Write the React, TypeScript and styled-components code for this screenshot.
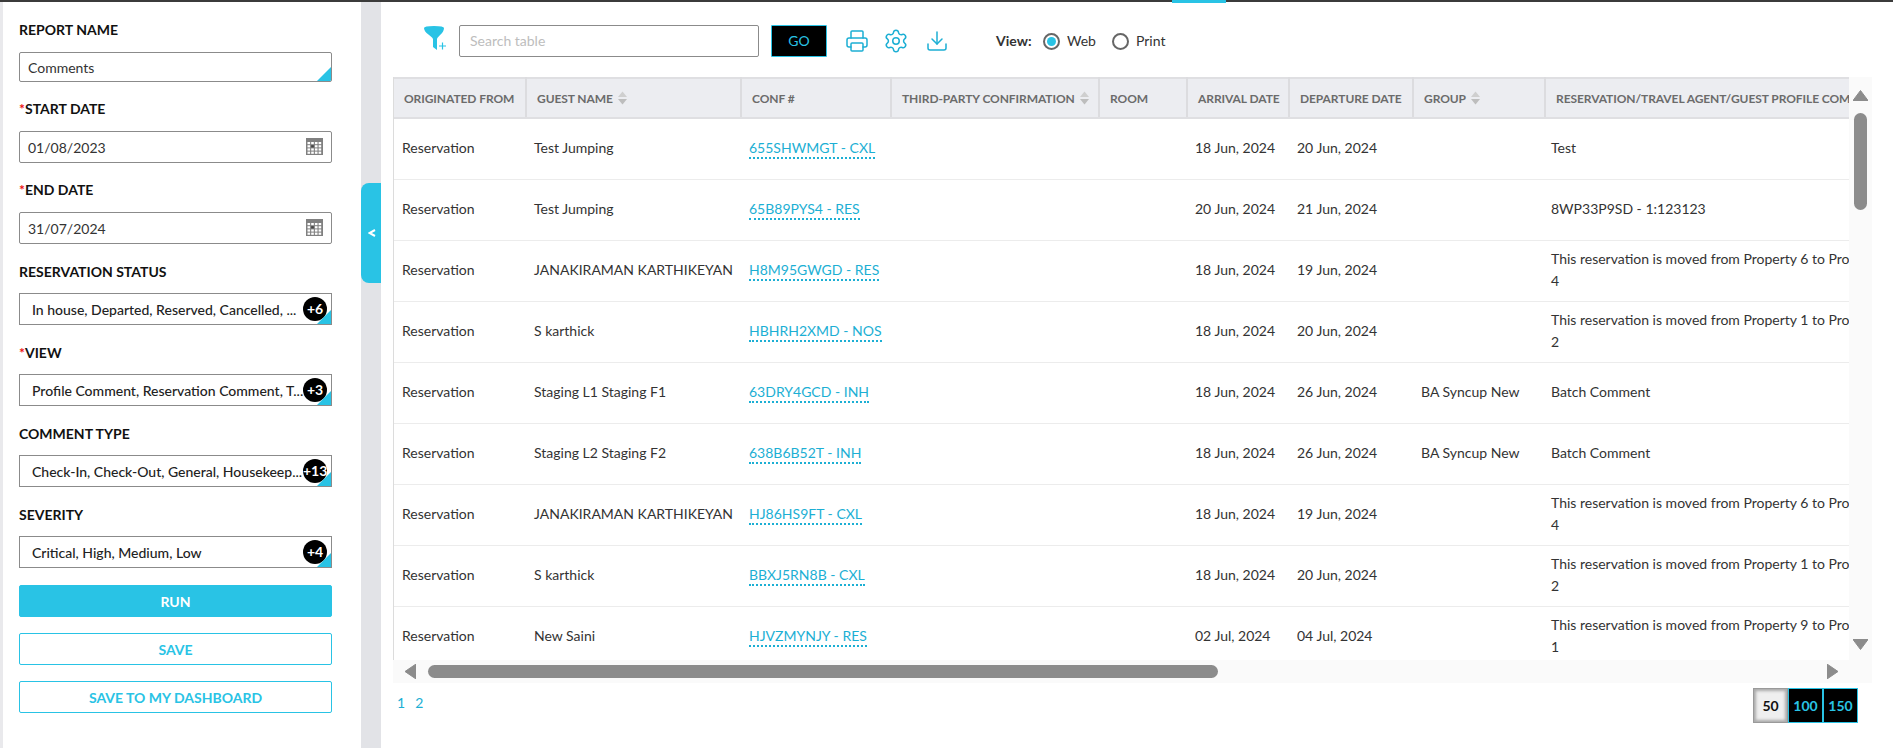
import React from "react";
import styled, { createGlobalStyle } from "styled-components";
import { Printer, Settings, Download } from "lucide-react";

const CYAN = "#29c3e5";
const LINK = "#1cafd4";

const Global = createGlobalStyle`
  html, body { margin: 0; padding: 0; background: #fff; }
  * { box-sizing: border-box; }
  body { font-family: Lato, "Liberation Sans", sans-serif; color: #222; overflow: hidden; }
`;

const Page = styled.div`
  width: 1893px;
  height: 748px;
  display: flex;
  flex-direction: column;
  overflow: hidden;
  background: #fff;
`;
const TopBar = styled.div`
  height: 2px;
  flex: none;
  background: #3b3b3b;
  position: relative;
`;
const TopAccent = styled.span`
  position: absolute;
  left: 1172px;
  top: 0;
  width: 54px;
  height: 3px;
  background: ${CYAN};
`;
const Body = styled.div`
  flex: 1;
  display: flex;
  min-height: 0;
`;
const Side = styled.aside`
  width: 361px;
  flex: none;
  border-left: 3px solid #e9e9ec;
  padding: 18px 29px 0 16px;
  display: flex;
  flex-direction: column;
`;
const Label = styled.label<{ $low?: boolean }>`
  font-size: 14px;
  font-weight: 700;
  line-height: 20px;
  height: 20px;
  padding-top: ${(p) => (p.$low ? 1 : 0)}px;
  color: #111;
  margin-bottom: 12px;
  display: block;
  white-space: nowrap;
`;
const Star = styled.span`
  color: #e11;
`;
const Field = styled.div<{ $h?: number }>`
  position: relative;
  height: ${(p) => p.$h ?? 32}px;
  border: 1px solid #8b8b8b;
  border-radius: 2px;
  margin-bottom: 17px;
  font-size: 14px;
  display: flex;
  align-items: center;
  padding-left: 8px;
  color: #333;
  background: #fff;
  overflow: hidden;
`;
const MultiField = styled(Field)`
  padding-left: 12px;
  font-weight: 500;
  color: #222;
  border-radius: 0;
`;
const Corner = styled.span`
  position: absolute;
  right: 0;
  bottom: 0;
  width: 0;
  height: 0;
  border-style: solid;
  border-width: 0 0 14px 14px;
  border-color: transparent transparent ${CYAN} transparent;
`;
const Count = styled.span`
  position: absolute;
  right: 4px;
  top: 3px;
  width: 24px;
  height: 24px;
  border-radius: 50%;
  background: #000;
  color: #fff;
  font-size: 14px;
  font-weight: 700;
  text-align: center;
  line-height: 24px;
  white-space: nowrap;
`;
const CalWrap = styled.span`
  position: absolute;
  right: 8px;
  top: 6px;
  display: flex;
`;
const RunBtn = styled.button`
  height: 32px;
  width: 100%;
  border: 1px solid ${CYAN};
  background: ${CYAN};
  color: #fff;
  font: 700 14px Lato, sans-serif;
  border-radius: 2px;
  margin-bottom: 16px;
  padding: 0;
`;
const OutlineBtn = styled(RunBtn)`
  background: #fff;
  color: ${CYAN};
`;
const Gutter = styled.div`
  width: 20px;
  flex: none;
  background: #e2e3e7;
  padding-top: 181px;
`;
const Toggle = styled.div`
  width: 20px;
  height: 100px;
  background: ${CYAN};
  border-radius: 8px 0 0 8px;
  color: #fff;
  display: flex;
  align-items: center;
  justify-content: center;
  padding-left: 2px;
`;
const Main = styled.main`
  flex: 1;
  min-width: 0;
  padding: 23px 0 0 12px;
  display: flex;
  flex-direction: column;
`;
const Toolbar = styled.div`
  display: flex;
  align-items: center;
  height: 32px;
  margin-bottom: 20px;
  padding-left: 30px;
`;
const FilterBtn = styled.span`
  display: flex;
  width: 24px;
  margin-right: 12px;
  padding-bottom: 4px;
`;
const Search = styled.div`
  width: 300px;
  height: 32px;
  border: 1px solid #8b8b8b;
  border-radius: 2px;
  font-size: 14px;
  color: #bdbdbd;
  display: flex;
  align-items: center;
  padding: 0 0 2px 10px;
`;
const GoBtn = styled.button`
  margin-left: 12px;
  width: 56px;
  height: 32px;
  background: #000;
  border: 1px solid ${CYAN};
  color: ${CYAN};
  font: 400 14px Lato, sans-serif;
  border-radius: 1px;
  padding: 0 0 2px;
`;
const Tool = styled.span<{ $ml: number }>`
  display: flex;
  margin-left: ${(p) => p.$ml}px;
  color: ${LINK};
`;
const ViewLabel = styled.span`
  margin-left: 47px;
  font-size: 14px;
  font-weight: 700;
  color: #333;
  width: 47px;
  padding-bottom: 2px;
`;
const Radio = styled.span<{ $on?: boolean }>`
  width: 17px;
  height: 17px;
  border-radius: 50%;
  border: 2px solid #666;
  background: #fff;
  display: flex;
  align-items: center;
  justify-content: center;
  &::after {
    content: "";
    width: 9px;
    height: 9px;
    border-radius: 50%;
    background: ${(p) => (p.$on ? CYAN : "transparent")};
  }
`;
const RadioText = styled.span<{ $w: number }>`
  margin-left: 7px;
  font-size: 14px;
  color: #333;
  width: ${(p) => p.$w}px;
  padding-bottom: 2px;
`;
const TableArea = styled.div`
  width: 1479px;
  display: grid;
  grid-template-columns: 1456px 23px;
  grid-template-rows: 583px 23px;
`;
const TableClip = styled.div`
  overflow: hidden;
  border-left: 1px solid #dcdcdc;
`;
const Table = styled.table`
  border-collapse: collapse;
  table-layout: fixed;
  width: 1506px;
`;
const Th = styled.th<{ $w: number }>`
  width: ${(p) => p.$w}px;
  height: 40px;
  background: #ecedf1;
  border-top: 2px solid #dfdfe2;
  border-bottom: 2px solid #dfdfe2;
  border-right: 2px solid #dcdcdf;
  font-size: 12px;
  font-weight: 700;
  letter-spacing: -0.08px;
  color: #6b6b6b;
  text-align: left;
  padding: 0 0 0 10px;
  white-space: nowrap;
  overflow: hidden;
`;
const SortIcon = styled.svg`
  margin-left: 5px;
  vertical-align: -2px;
`;
const Td = styled.td`
  height: 61px;
  border-bottom: 1px solid #ececec;
  font-size: 14px;
  line-height: 22px;
  color: #333;
  padding: 0 8px 2px 8px;
  vertical-align: middle;
  white-space: nowrap;
`;
const CommentTd = styled(Td)`
  white-space: normal;
  padding-left: 6px;
  padding-right: 10px;
`;
const ConfLink = styled.a`
  color: ${LINK};
  border-bottom: 2px dotted ${LINK};
  padding-bottom: 1px;
  font-size: 14px;
`;
const VTrack = styled.div`
  background: #fafafa;
  display: flex;
  flex-direction: column;
  align-items: center;
  padding-top: 13px;
`;
const VThumb = styled.div`
  width: 13px;
  height: 97px;
  border-radius: 7px;
  background: #8c8c8c;
  margin-top: 12px;
  margin-bottom: 429px;
`;
const HTrack = styled.div`
  background: #fafafa;
  display: flex;
  align-items: center;
  padding-left: 12px;
`;
const HThumb = styled.div`
  width: 790px;
  height: 13px;
  border-radius: 7px;
  background: #8c8c8c;
  margin-left: 12px;
  margin-right: 609px;
`;
const Corner2 = styled.div`
  background: #fafafa;
`;
const Footer = styled.div`
  width: 1465px;
  display: flex;
  justify-content: space-between;
  padding-top: 5px;
`;
const Pages = styled.div`
  display: flex;
  gap: 10px;
  padding: 6px 0 0 4px;
  font-size: 14px;
  line-height: 17px;
  color: ${LINK};
`;
const Sizes = styled.div`
  display: flex;
`;
const SizeBtn = styled.button<{ $on?: boolean }>`
  width: 35px;
  height: 35px;
  padding: 0;
  font: 700 14px Lato, sans-serif;
  color: ${(p) => (p.$on ? "#111" : CYAN)};
  background: ${(p) => (p.$on ? "#efefef" : "#000")};
  border: ${(p) => (p.$on ? "1px solid #9a9a9a" : `1px solid ${CYAN}`)};
  box-shadow: ${(p) => (p.$on ? "inset 0 0 3px 2px #aaa" : "none")};
`;

const Calendar = () => (
  <svg width="17" height="17" viewBox="0 0 17 17">
    <rect x="0" y="0" width="17" height="17" fill="#808080" />
    {[0, 1, 2, 3].map((r) =>
      [0, 1, 2, 3].map((c) => (
        <rect
          key={`${r}-${c}`}
          x={1.5 + c * 3.7}
          y={4 + r * 3.2}
          width="2.6"
          height="2.2"
          fill={r === 1 && c === 1 ? "#444" : "#fff"}
        />
      ))
    )}
  </svg>
);

const Funnel = () => (
  <svg width="24" height="28" viewBox="0 0 24 28">
    <path d="M1 3 Q1 1 11 1 Q21 1 21 3 C21 8 15 11 14 14 L14 25 L10 22 L10 14 C9 11 1 8 1 3Z" fill={CYAN} />
    <path d="M16 21h7M19.5 17.5v7" stroke={CYAN} strokeWidth="1.2" fill="none" />
  </svg>
);

const Sort = () => (
  <SortIcon width="9" height="14" viewBox="0 0 9 14">
    <path d="M4.5 0.5L9 6H0Z" fill="#cfcfcf" />
    <path d="M4.5 13.5L9 8H0Z" fill="#bdbdbd" />
  </SortIcon>
);

const Tri = ({ d }: { d: "u" | "d" | "l" | "r" }) => {
  const paths = {
    u: "M7.5 0.5L15 10.5H0Z",
    d: "M7.5 10.5L15 0.5H0Z",
    l: "M0 7.5L11 0V15Z",
    r: "M11 7.5L0 0V15Z",
  };
  const horizontal = d === "l" || d === "r";
  return (
    <svg width={horizontal ? 11 : 15} height={horizontal ? 15 : 11} viewBox={horizontal ? "0 0 11 15" : "0 0 15 11"}>
      <path d={paths[d]} fill="#8c8c8c" stroke="#8c8c8c" strokeWidth="1" strokeLinejoin="round" />
    </svg>
  );
};

const columns: { t: string; w: number; sort?: boolean }[] = [
  { t: "ORIGINATED FROM", w: 132 },
  { t: "GUEST NAME", w: 215, sort: true },
  { t: "CONF #", w: 150 },
  { t: "THIRD-PARTY CONFIRMATION", w: 208, sort: true },
  { t: "ROOM", w: 88 },
  { t: "ARRIVAL DATE", w: 102 },
  { t: "DEPARTURE DATE", w: 124 },
  { t: "GROUP", w: 132, sort: true },
  { t: "RESERVATION/TRAVEL AGENT/GUEST PROFILE COMMENTS", w: 355 },
];

const moved = (a: number, b: number) => `This reservation is moved from Property ${a} to Property ${b}`;

const rows = [
  ["Test Jumping", "655SHWMGT - CXL", "18 Jun, 2024", "20 Jun, 2024", "", "Test"],
  ["Test Jumping", "65B89PYS4 - RES", "20 Jun, 2024", "21 Jun, 2024", "", "8WP33P9SD - 1:123123"],
  ["JANAKIRAMAN KARTHIKEYAN", "H8M95GWGD - RES", "18 Jun, 2024", "19 Jun, 2024", "", moved(6, 4)],
  ["S karthick", "HBHRH2XMD - NOS", "18 Jun, 2024", "20 Jun, 2024", "", moved(1, 2)],
  ["Staging L1 Staging F1", "63DRY4GCD - INH", "18 Jun, 2024", "26 Jun, 2024", "BA Syncup New", "Batch Comment"],
  ["Staging L2 Staging F2", "638B6B52T - INH", "18 Jun, 2024", "26 Jun, 2024", "BA Syncup New", "Batch Comment"],
  ["JANAKIRAMAN KARTHIKEYAN", "HJ86HS9FT - CXL", "18 Jun, 2024", "19 Jun, 2024", "", moved(6, 4)],
  ["S karthick", "BBXJ5RN8B - CXL", "18 Jun, 2024", "20 Jun, 2024", "", moved(1, 2)],
  ["New Saini", "HJVZMYNJY - RES", "02 Jul, 2024", "04 Jul, 2024", "", moved(9, 1)],
];

const multi = [
  { label: "RESERVATION STATUS", req: false, text: "In house, Departed, Reserved, Cancelled, ...", n: "+6" },
  { label: "VIEW", req: true, text: "Profile Comment, Reservation Comment, T...", n: "+3" },
  { label: "COMMENT TYPE", req: false, text: "Check-In, Check-Out, General, Housekeep...", n: "+13" },
  { label: "SEVERITY", req: false, text: "Critical, High, Medium, Low", n: "+4" },
];

export default function App() {
  return (
    <Page>
      <Global />
      <TopBar>
        <TopAccent />
      </TopBar>
      <Body>
        <Side>
          <Label>REPORT NAME</Label>
          <Field $h={30}>
            Comments
            <Corner />
          </Field>
          <Label>
            <Star>*</Star>START DATE
          </Label>
          <Field>
            01/08/2023
            <CalWrap>
              <Calendar />
            </CalWrap>
          </Field>
          <Label>
            <Star>*</Star>END DATE
          </Label>
          <Field>
            31/07/2024
            <CalWrap>
              <Calendar />
            </CalWrap>
          </Field>
          {multi.map((m) => (
            <React.Fragment key={m.label}>
              <Label $low>
                {m.req && <Star>*</Star>}
                {m.label}
              </Label>
              <MultiField>
                {m.text}
                <Count>{m.n}</Count>
                <Corner />
              </MultiField>
            </React.Fragment>
          ))}
          <RunBtn>RUN</RunBtn>
          <OutlineBtn>SAVE</OutlineBtn>
          <OutlineBtn>SAVE TO MY DASHBOARD</OutlineBtn>
        </Side>
        <Gutter>
          <Toggle>
            <svg width="8" height="8" viewBox="0 0 8 8">
              <path d="M7 1L1.5 4L7 7" stroke="#fff" strokeWidth="2" fill="none" />
            </svg>
          </Toggle>
        </Gutter>
        <Main>
          <Toolbar>
            <FilterBtn>
              <Funnel />
            </FilterBtn>
            <Search>Search table</Search>
            <GoBtn>GO</GoBtn>
            <Tool $ml={18}>
              <Printer size={24} strokeWidth={1.5} />
            </Tool>
            <Tool $ml={14}>
              <Settings size={26} strokeWidth={1.4} />
            </Tool>
            <Tool $ml={16}>
              <Download size={24} strokeWidth={1.5} />
            </Tool>
            <ViewLabel>View:</ViewLabel>
            <Radio $on />
            <RadioText $w={45}>Web</RadioText>
            <Radio />
            <RadioText $w={40}>Print</RadioText>
          </Toolbar>
          <TableArea>
            <TableClip>
              <Table>
                <thead>
                  <tr>
                    {columns.map((c) => (
                      <Th key={c.t} $w={c.w}>
                        {c.t}
                        {c.sort && <Sort />}
                      </Th>
                    ))}
                  </tr>
                </thead>
                <tbody>
                  {rows.map((r) => (
                    <tr key={r[1]}>
                      <Td>Reservation</Td>
                      <Td>{r[0]}</Td>
                      <Td>
                        <ConfLink>{r[1]}</ConfLink>
                      </Td>
                      <Td />
                      <Td />
                      <Td>{r[2]}</Td>
                      <Td>{r[3]}</Td>
                      <Td>{r[4]}</Td>
                      <CommentTd>{r[5]}</CommentTd>
                    </tr>
                  ))}
                </tbody>
              </Table>
            </TableClip>
            <VTrack>
              <Tri d="u" />
              <VThumb />
              <Tri d="d" />
            </VTrack>
            <HTrack>
              <Tri d="l" />
              <HThumb />
              <Tri d="r" />
            </HTrack>
            <Corner2 />
          </TableArea>
          <Footer>
            <Pages>
              <span>1</span>
              <span>2</span>
            </Pages>
            <Sizes>
              <SizeBtn $on>50</SizeBtn>
              <SizeBtn>100</SizeBtn>
              <SizeBtn>150</SizeBtn>
            </Sizes>
          </Footer>
        </Main>
      </Body>
    </Page>
  );
}
